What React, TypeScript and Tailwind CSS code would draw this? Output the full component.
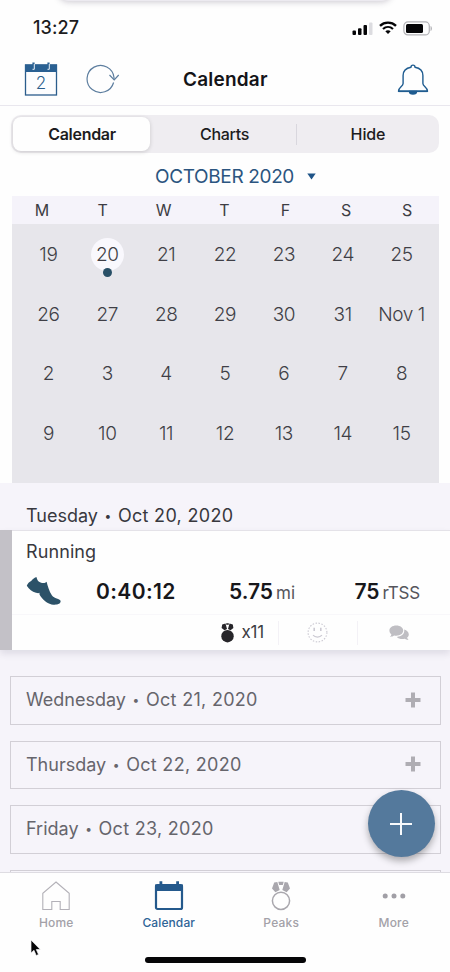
import { clsx } from 'clsx';

const weekdays = ['M', 'T', 'W', 'T', 'F', 'S', 'S'];

const days = [
  '19', '20', '21', '22', '23', '24', '25',
  '26', '27', '28', '29', '30', '31', 'Nov 1',
  '2', '3', '4', '5', '6', '7', '8',
  '9', '10', '11', '12', '13', '14', '15',
];

const upcoming = [
  { day: 'Wednesday', date: 'Oct 21, 2020' },
  { day: 'Thursday', date: 'Oct 22, 2020' },
  { day: 'Friday', date: 'Oct 23, 2020' },
];

const DayTitle = ({ day, date }: { day: string; date: string }) => (
  <span className="flex items-center">
    <span>{day}</span>
    <span className="w-[20px] text-center text-[12px]">•</span>
    <span className="tracking-[0.3px]">{date}</span>
  </span>
);

const StatusBar = () => (
  <div className="flex h-[53px] shrink-0 items-center justify-between pl-[33px] pr-[17px] pt-[3px]">
    <span className="text-[18px] font-medium leading-none tracking-[0.1px] text-[#1c1c20]">13:27</span>
    <div className="flex items-center gap-[6px]">
      <svg width="21" height="13" viewBox="0 0 21 13">
        <rect x="0.5" y="8.5" width="3.5" height="4.5" rx="1" fill="#050507" />
        <rect x="6" y="6.2" width="3.5" height="6.8" rx="1" fill="#050507" />
        <rect x="11.5" y="3" width="3.5" height="10" rx="1" fill="#050507" />
        <rect x="17" y="0.5" width="3.5" height="12.5" rx="1" fill="#dcdce0" />
      </svg>
      <svg width="18" height="14" viewBox="0 0 18 14" fill="none" stroke="#050507">
        <path d="M1 4.8C5.5 0.6 12.5 0.6 17 4.8" strokeWidth="2.4" />
        <path d="M4 8C6.9 5.3 11.1 5.3 14 8" strokeWidth="2.2" />
        <path d="M6.3 10.2C7.9 8.9 10.1 8.9 11.7 10.2L9 13Z" fill="#050507" stroke="none" />
      </svg>
      <svg width="30" height="15" viewBox="0 0 30 15">
        <rect x="0.9" y="0.9" width="25.4" height="13" rx="4" fill="none" stroke="#b2b2b6" strokeWidth="1.2" />
        <rect x="3" y="3" width="17" height="9" rx="1.5" fill="#050507" />
        <path d="M27.6 5v5c1.6-.6 1.6-4.4 0-5z" fill="#a5a5aa" />
      </svg>
    </div>
  </div>
);

const NavBar = () => (
  <div className="flex h-[53px] shrink-0 items-center border-b border-[#e9e7ee] pl-6 pr-[21px]">
    <div className="flex w-[159px] items-center gap-7">
      <svg width="34" height="34" viewBox="0 0 34 34">
        <rect x="1.5" y="3" width="31" height="30" fill="#fdfdfe" stroke="#2b5d8c" strokeWidth="1.3" />
        <rect x="1" y="2.5" width="32" height="7.5" fill="#2a6092" />
        <path d="M9.5 0.5v6M24.5 0.5v6" stroke="#2a6092" strokeWidth="2.2" />
        <path d="M10.3 2v5.3h-1.8M25.3 2v5.3h-1.8" stroke="#e8eff6" strokeWidth="1" fill="none" />
        <text x="17" y="26.5" textAnchor="middle" fontSize="17" fontWeight="300" fill="#2b5d8c">
          2
        </text>
      </svg>
      <svg width="34" height="32" viewBox="0 0 34 32" fill="none" stroke="#5d7e9f" strokeWidth="1.2">
        <path d="M27.6 19.5A13.5 13.5 0 1 1 28 14.5V16.5" />
        <path d="M23.5 12l4.7 4.8L32.7 12" />
      </svg>
    </div>
    <h1 className="text-[19px] font-semibold leading-none tracking-[0.2px] text-[#141418]">Calendar</h1>
    <div className="flex flex-1 justify-end">
      <svg width="32" height="32" viewBox="0 0 32 32" fill="none" stroke="#1f5c90" strokeWidth="1.4">
        <path
          d="M14 4.2C14 1.4 18 1.4 18 4.2C23 5 25.9 8.3 25.9 12.5V20.5C25.9 23.5 30.5 24.3 30.5 28.2H1.5C1.5 24.3 6.1 23.5 6.1 20.5V12.5C6.1 8.3 9 5 14 4.2Z"
          strokeLinejoin="round"
        />
        <path d="M12.5 28.5a3.5 2.6 0 0 0 7 0z" fill="#1f5c90" />
        <path d="M1.5 28.3h29" strokeWidth="1.6" />
      </svg>
    </div>
  </div>
);

const SegmentedControl = () => (
  <div className="mx-[11px] mt-[9px] flex h-[38px] shrink-0 items-center rounded-[10px] bg-[#efedf1] text-[16px] font-medium leading-none text-[#1c1c20]">
    <div className="ml-[2px] flex h-[34px] w-[137px] items-center justify-center rounded-[8px] bg-[#fefefe] pl-px font-semibold tracking-[-0.3px] shadow-[0_1px_4px_rgba(0,0,0,0.16)]">
      Calendar
    </div>
    <div className="flex h-[21px] w-[147px] items-center justify-center border-r border-[#d9d7de] pl-[3px] tracking-[-0.3px]">
      Charts
    </div>
    <div className="flex-1 text-center tracking-[-0.1px]">Hide</div>
  </div>
);

const MonthGrid = () => (
  <>
    <div className="flex h-[43px] shrink-0 items-center gap-[13px] pl-[155px] pt-[3px] text-[#2b5580]">
      <span className="text-[19px] leading-none tracking-[-0.35px]">OCTOBER 2020</span>
      <svg width="9" height="7" viewBox="0 0 9 7">
        <path d="M0.3 0.5h8.4L4.5 6.5z" fill="#1f5488" />
      </svg>
    </div>
    <div className="ml-[12px] mr-[11px] grid h-[28px] shrink-0 grid-cols-7 items-center bg-[#f5f3fa] pr-px text-center text-[16px] leading-none text-[#3d3d43]">
      {weekdays.map((day, i) => (
        <span key={i} className="-ml-px">
          {day}
        </span>
      ))}
    </div>
    <div className="ml-[12px] mr-[11px] grid h-[259px] shrink-0 auto-rows-[59.8px] grid-cols-7 bg-[#e7e6eb] pl-[7px] pr-[8px] pt-[0.5px] text-[19px] font-light leading-none tracking-[-0.4px] text-[#3f3f46]">
      {days.map((day) => (
        <div key={day} className="flex items-center justify-center whitespace-nowrap">
          {day === '20' ? (
            <span className="relative flex h-[33px] w-[33px] items-center justify-center rounded-full bg-[#f9f8fd]">
              {day}
              <span className="absolute -bottom-[6px] left-[12px] h-[9px] w-[9px] rounded-full bg-[#284f66]" />
            </span>
          ) : (
            day
          )}
        </div>
      ))}
    </div>
  </>
);

const WorkoutCard = () => (
  <div className="flex h-[120px] shrink-0 bg-[#fefefe] shadow-[0_4px_7px_rgba(60,50,80,0.12)]">
    <div className="w-[12px] bg-[#c3c1c7]" />
    <div className="flex flex-1 flex-col border-t border-[#e4e2e8]">
      <div className="flex h-[42px] items-center pl-[14px] text-[18px] leading-none tracking-[0.1px] text-[#38383e]">
        Running
      </div>
      <div className="flex h-[42px] items-center border-b border-[#f8f7fa] pb-[5px] pl-[14px] pr-[30px] text-[21px] font-semibold leading-none text-[#17171b]">
        <svg className="mb-px" width="36" height="30" viewBox="0 0 36 30" fill="#2c5268">
          <path d="M10.4 1C11 2.8 11.3 4.5 13 5.8C15.5 7.4 18.2 7.4 19.6 6.5L20.6 5.7C21.6 9.5 23.2 15.5 26 19.4C28 22.3 33.8 22.7 34.6 24.8C35 28.3 30.5 29.2 25.5 28.4C20.2 27.3 16.5 23.3 13.6 18.8L13.4 16.8C12.5 17.4 11.7 17.2 10 16.8C6 15.8 3.3 13.2 0.8 9.8C1.5 7.3 3.5 6 5.2 5C6.5 3.5 8 1.8 10.4 1Z" />
        </svg>
        <span className="ml-[34px] w-[133px] tracking-[0.4px]">0:40:12</span>
        <span className="flex flex-1 items-baseline gap-[3px]">
          5.75<span className="text-[17px] font-normal text-[#55555c]">mi</span>
        </span>
        <span className="flex items-baseline gap-[3px]">
          75<span className="text-[17px] font-normal tracking-[-0.2px] text-[#55555c]">rTSS</span>
        </span>
      </div>
      <div className="flex h-[35px] items-center">
        <div className="flex h-[24px] w-[267px] items-center justify-end gap-[7px] border-r border-[#f3f1f6] pr-[14px] text-[17px] leading-none tracking-[-0.2px] text-[#3d3d43]">
          <svg width="13" height="20" viewBox="0 0 13 20" fill="#262529">
            <path d="M1.2 1.5L4.5 0.5 6 6 3.5 7.2 0.6 5zM11.8 1.5L8.5 0.5 7 6l2.5 1.2L12.4 5zM5.2 0.3h2.6v1.5H5.2z" />
            <circle cx="6.5" cy="13.2" r="6.2" />
          </svg>
          x11
        </div>
        <div className="flex h-[24px] w-[79px] items-center justify-center border-r border-[#f3f1f6] pr-[2px]">
          <svg width="21" height="21" viewBox="0 0 21 21" fill="none" stroke="#cbc9d2">
            <circle cx="10.5" cy="10.5" r="9.4" strokeWidth="1.1" strokeDasharray="1.5 1.5" />
            <path d="M7.2 5.8v3.2M13.8 5.8v3.2" strokeWidth="1.6" />
            <path d="M6 13.2c2.2 2.6 6.800 2.600 9 0" strokeWidth="1.1" />
          </svg>
        </div>
        <div className="flex flex-1 justify-center pr-[10px] pt-px">
          <svg width="20" height="16" viewBox="0 0 20 16" fill="#bfbec3">
            <path d="M15.2 4.6C18 5.4 19.8 7.2 19.8 9.4c0 1.3-.7 2.4-1.7 3.2.2.9.7 1.6 1.4 2.3-1.5.1-2.8-.3-3.9-1.1-3.2.6-6.2-.1-7.7-1.9 4.5-.3 8-2.8 7.3-7.3z" />
            <path d="M7.3 0.5C11.3 0.5 14.2 2.7 14.2 5.6C14.2 8.5 11.3 10.7 7.3 10.7C6.6 10.7 5.8 10.6 5.1 10.5C4 11.3 2.7 11.8 1 11.7C1.7 11 2.2 10.3 2.4 9.4C1.1 8.5 0.4 7.1 0.4 5.6C0.4 2.7 3.3 0.5 7.3 0.5Z" />
          </svg>
        </div>
      </div>
    </div>
  </div>
);

const Agenda = () => (
  <div className="relative flex min-h-0 flex-1 flex-col overflow-hidden bg-[#f6f4fa]">
    <div className="flex h-[47px] shrink-0 items-center pl-[26px] pt-[18px] text-[18px] leading-none text-[#38383e]">
      <DayTitle day="Tuesday" date="Oct 20, 2020" />
    </div>
    <WorkoutCard />
    <div className="ml-[10px] mr-[9px] mt-[26px] flex shrink-0 flex-col gap-[16px]">
      {upcoming.map(({ day, date }) => (
        <div
          key={day}
          className="flex h-[48.5px] items-center justify-between border border-[#d2cfd6] pl-[15px] pr-[19px] text-[18px] leading-none text-[#66656c]"
        >
          <DayTitle day={day} date={date} />
          <svg className="mb-px" width="16" height="16" viewBox="0 0 16 16" stroke="#afadb3" strokeWidth="4">
            <path d="M8 0.5v15M0.5 8h15" />
          </svg>
        </div>
      ))}
      <div className="h-[48px] border border-[#d2cfd6]" />
    </div>
    {/* floating add button */}
    <button className="absolute right-[15.5px] top-[307px] flex h-[67px] w-[67px] items-center justify-center rounded-full bg-[#54799c] shadow-[0_4px_7px_rgba(0,0,0,0.3)]">
      <svg width="22" height="22" viewBox="0 0 22 22" stroke="#f8fafc" strokeWidth="2">
        <path d="M11 0v22M0 11h22" />
      </svg>
    </button>
  </div>
);

const tabs = [
  {
    label: 'Home',
    icon: (
      <svg width="28" height="30" viewBox="0 0 28 30" fill="none" stroke="#b3b1b8" strokeWidth="1.1">
        <path d="M14 1L27.2 12.3V28.5H18.2V20.5H9.8V28.5H0.8V12.3Z" />
      </svg>
    ),
  },
  {
    label: 'Calendar',
    active: true,
    icon: (
      <svg width="30" height="30" viewBox="0 0 30 30">
        <rect x="2" y="4" width="26" height="24" rx="1.5" fill="none" stroke="#24598c" strokeWidth="2.2" />
        <path d="M1 3.5h28V10H1zM5.5 0.3h2.8v5H5.5zM22.2 0.3H25v5h-2.8z" fill="#24598c" />
      </svg>
    ),
  },
  {
    label: 'Peaks',
    icon: (
      <svg width="20" height="30" viewBox="0 0 20 30" fill="#a9a7ad">
        <path d="M3.2 1.5L6.3 1 8.7 9 4.4 11.2 1 7.5zM16.8 1.5L13.7 1 11.3 9l4.3 2.2L19 7.5zM7.3 0.7h5.4l-.9 3.2H8.2z" />
        <circle cx="10" cy="19.8" r="8.6" fill="none" stroke="#a9a7ad" strokeWidth="1.5" />
      </svg>
    ),
  },
  {
    label: 'More',
    icon: (
      <svg width="24" height="30" viewBox="0 0 24 30" fill="#a19fa6">
        <circle cx="3.2" cy="15" r="2.5" />
        <circle cx="12" cy="15" r="2.5" />
        <circle cx="20.8" cy="15" r="2.5" />
      </svg>
    ),
  },
];

const TabBar = () => (
  <div className="flex h-[100px] shrink-0 flex-col items-center border-t border-[#dedce2] bg-[#fefefe]">
    <div className="grid h-[84px] w-full grid-cols-4 pt-[8px]">
      {tabs.map(({ label, icon, active }) => (
        <div key={label} className="flex flex-col items-center gap-[4px]">
          {icon}
          <span
            className={clsx(
              'text-[12px] font-medium leading-[15px]',
              active ? 'tracking-[0.1px] text-[#2f6497]' : 'tracking-[0.2px] text-[#a3a1a8]'
            )}
          >
            {label}
          </span>
        </div>
      ))}
    </div>
    <div className="h-[6px] w-[161px] rounded-full bg-[#050507]" />
  </div>
);

const App = () => (
  <div className="relative flex h-[972px] w-[450px] flex-col overflow-hidden bg-[#fefefe] font-['Inter','Liberation_Sans',sans-serif]">
    <StatusBar />
    <NavBar />
    <SegmentedControl />
    <MonthGrid />
    <Agenda />
    <TabBar />
    {/* notification edge above the screen */}
    <div className="absolute left-[58px] right-[58px] -top-[20px] h-[21px] rounded-[12px] bg-[#eceaf0] shadow-[0_1px_6px_rgba(50,40,70,0.25)]" />
    {/* mouse pointer */}
    <svg className="absolute left-[30px] top-[939px]" width="12" height="18" viewBox="0 0 12 18">
      <path
        d="M1 1V14L4 11.3 6.2 16.5 8.5 15.5 6.3 10.5H10.3Z"
        fill="#050507"
        stroke="#f4f4f6"
        strokeWidth="0.7"
      />
    </svg>
  </div>
);

export default App;
